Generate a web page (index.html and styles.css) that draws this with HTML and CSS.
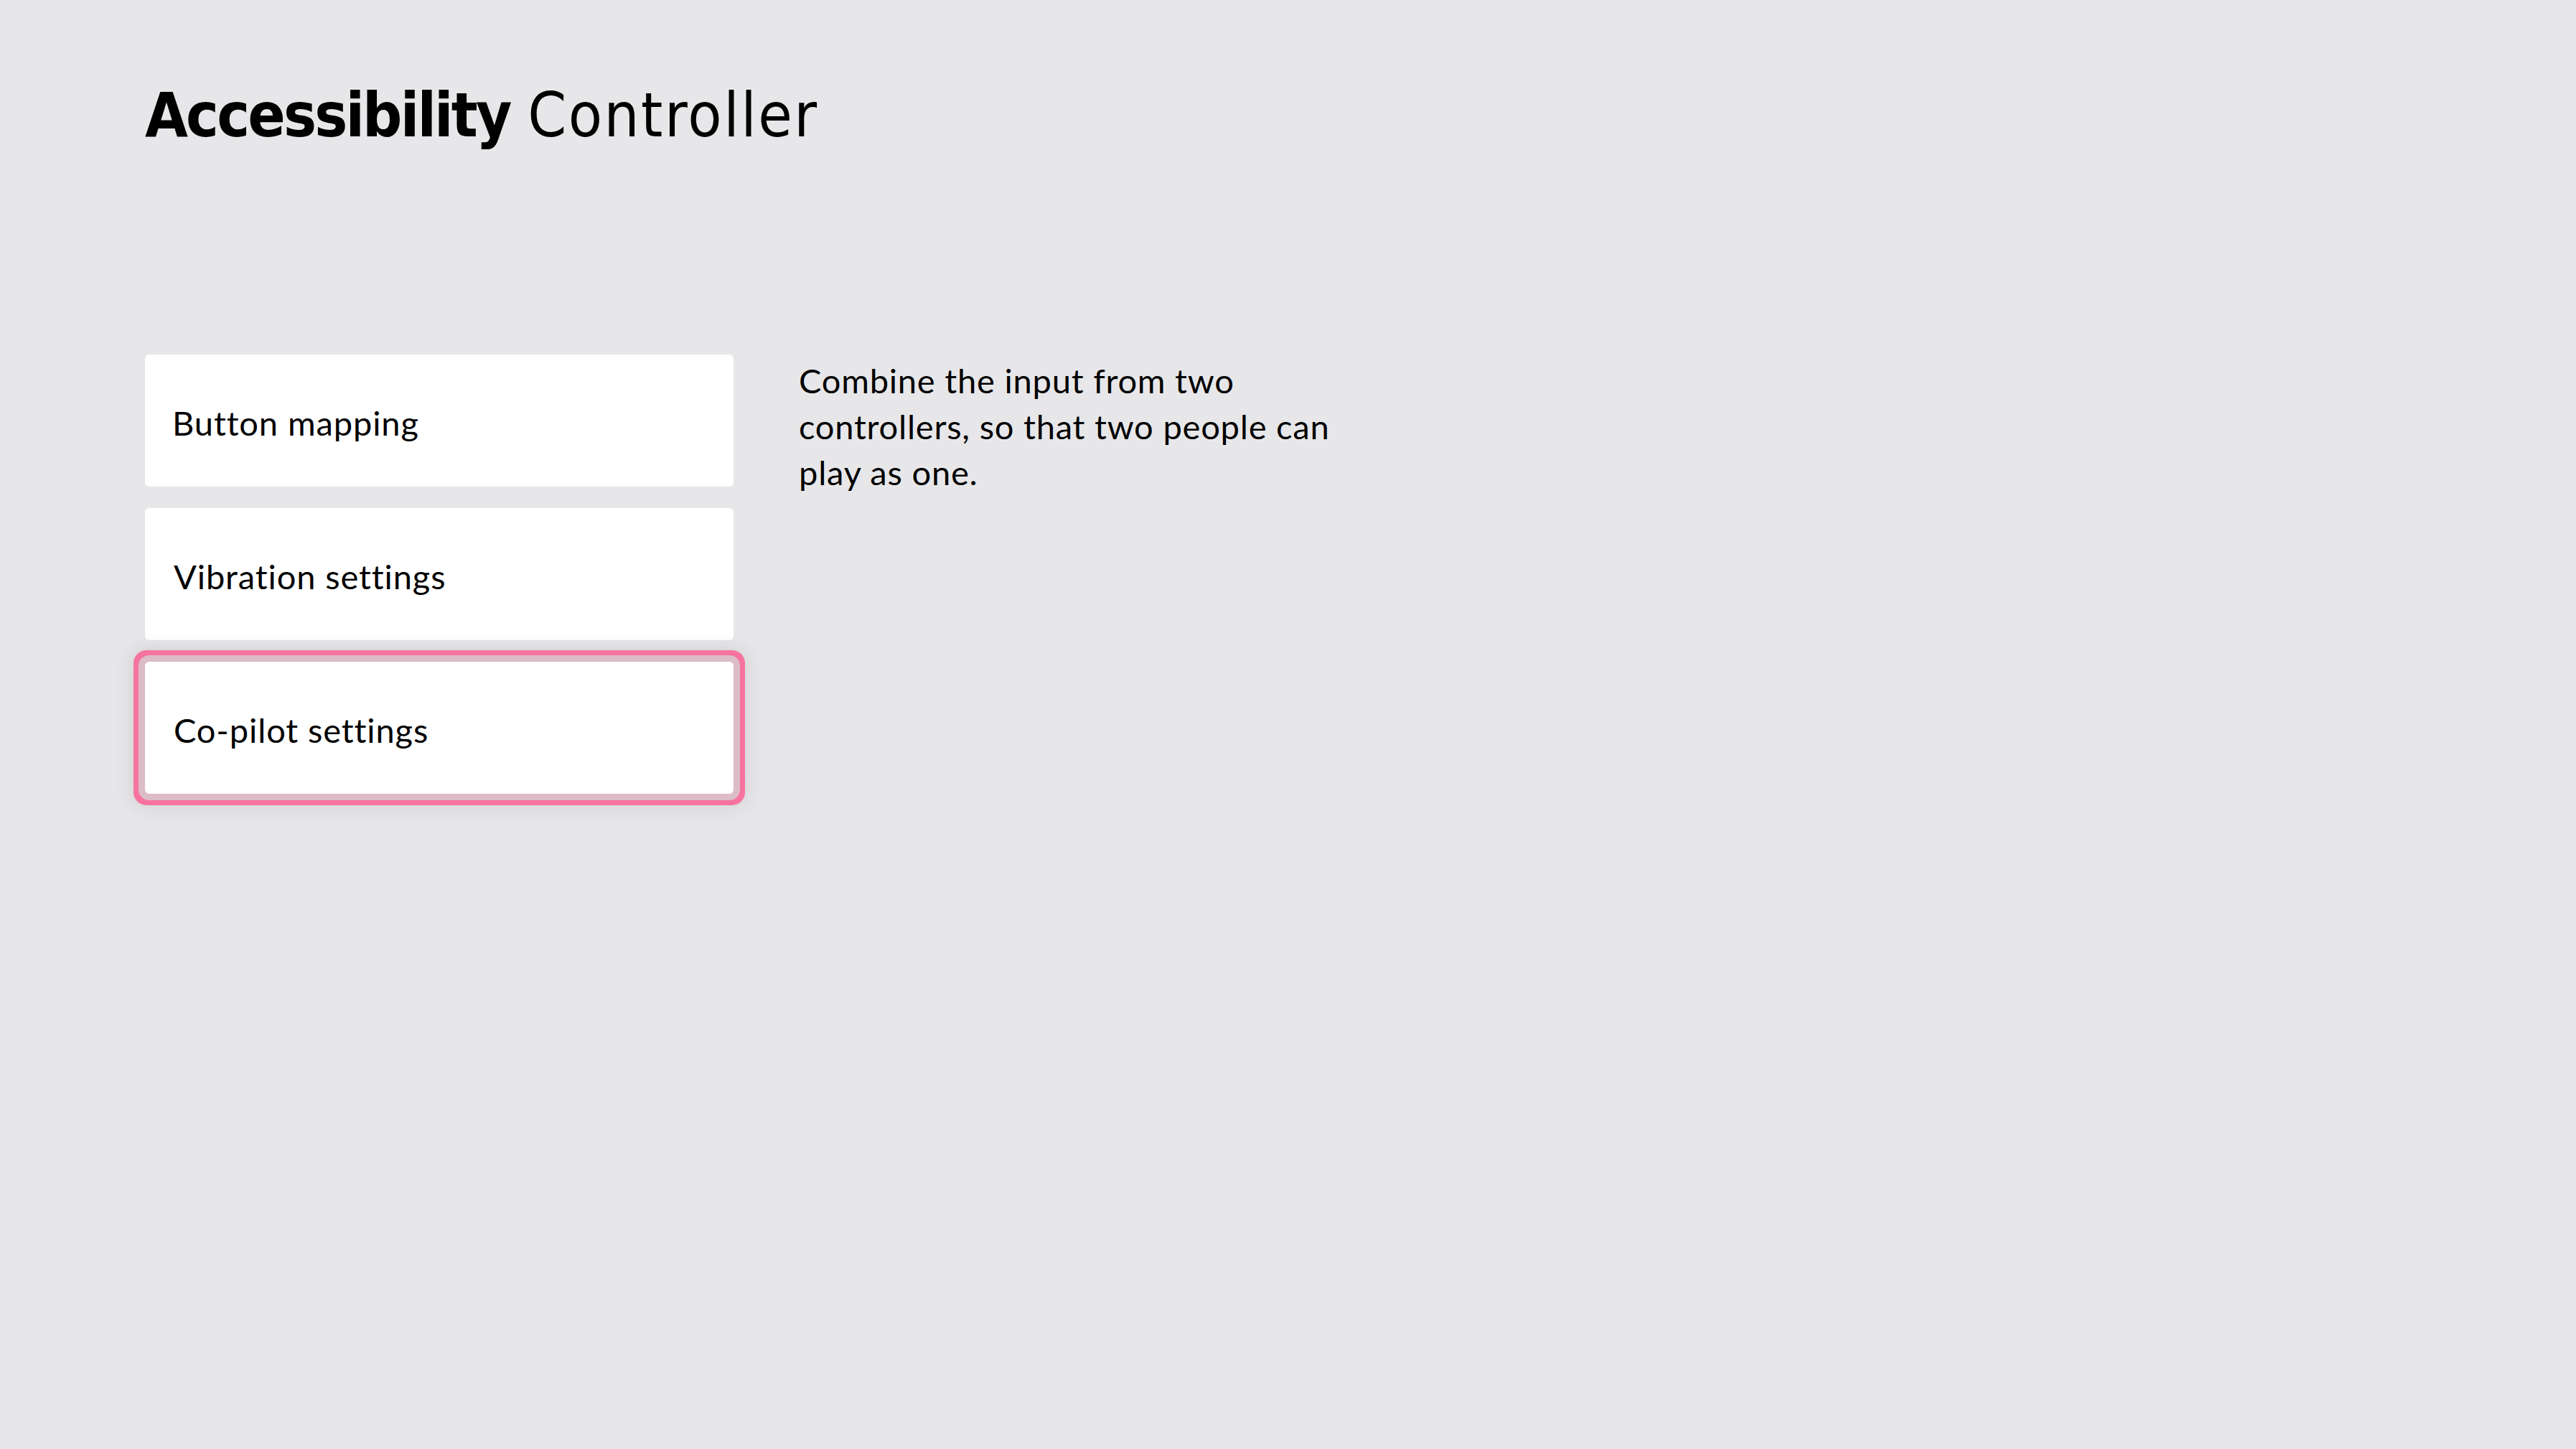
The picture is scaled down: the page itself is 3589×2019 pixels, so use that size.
FILE: index.html
```html
<!DOCTYPE html>
<html lang="en">
<head>
<meta charset="utf-8">
<title>Accessibility Controller</title>
<link rel="stylesheet" href="styles.css">
</head>
<body>
<div class="page">
  <h1 class="title"><span class="title-strong">Accessibility</span> <span class="title-light">Controller</span></h1>
  <div class="content">
    <ul class="menu">
      <li class="menu-item"><span class="label label-1">Button mapping</span></li>
      <li class="menu-item"><span class="label">Vibration settings</span></li>
      <li class="menu-item is-focused"><span class="label">Co-pilot settings</span></li>
    </ul>
    <p class="description">Combine the input from two controllers, so that two people can play as one.</p>
  </div>
</div>
</body>
</html>
```

FILE: styles.css
```css
html, body {
  margin: 0;
  padding: 0;
}
body {
  background: #e7e7e9;
  color: #000;
  width: 3589px;
  height: 2019px;
  overflow: hidden;
}
.page {
  padding: 117px 0 0 202px;
}
.title {
  margin: 0;
  font-family: "DejaVu Sans Condensed", "DejaVu Sans", sans-serif;
  font-stretch: condensed;
  font-size: 86px;
  line-height: 86px;
  font-weight: 400;
  white-space: nowrap;
}
.title-strong {
  font-weight: 700;
  letter-spacing: -2.8px;
}
.title-light {
  letter-spacing: 2.5px;
}
.content {
  display: flex;
  align-items: flex-start;
  gap: 91px;
  margin-top: 291px;
}
.menu {
  list-style: none;
  margin: 0;
  padding: 0;
  width: 820px;
  display: flex;
  flex-direction: column;
  gap: 30px;
}
.menu-item {
  height: 184px;
  background: #fff;
  border-radius: 6px;
  display: flex;
  align-items: center;
  padding: 6px 0 0 40px;
  box-sizing: border-box;
  font-family: Lato, "Noto Sans", sans-serif;
  font-size: 47px;
  letter-spacing: 0.9px;
  font-variant-ligatures: none;
}
.menu-item .label-1 {
  margin-left: -2px;
}
.is-focused {
  box-shadow:
    0 0 0 9px #dcbcc6,
    0 0 0 16px #f7739f,
    0 0 26px 18px rgba(120, 100, 110, 0.18);
  border-radius: 6px;
}
.description {
  margin: 4px 0 0;
  width: 760px;
  font-family: Lato, "Noto Sans", sans-serif;
  font-size: 47px;
  line-height: 64px;
  letter-spacing: 0.8px;
  font-variant-ligatures: none;
}
```
